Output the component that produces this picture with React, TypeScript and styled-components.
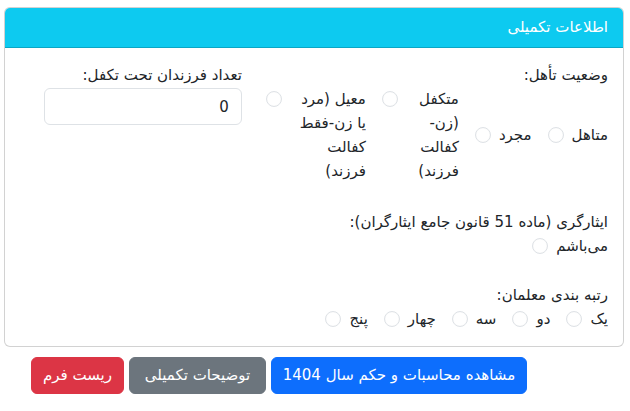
import React from 'react';
import styled, { createGlobalStyle } from 'styled-components';

const Global = createGlobalStyle`
  *, *::before, *::after { box-sizing: border-box; }
  html, body { margin: 0; padding: 0; background: #fff; }
  body {
    font-family: "DejaVu Sans", "Noto Sans", sans-serif;
    font-size: 16px;
    line-height: 1.5;
    color: #212529;
    direction: rtl;
  }
`;

const Page = styled.div`
  padding: 7px 6px 0 4px;
`;

const Card = styled.div`
  border: 1px solid rgba(0, 0, 0, 0.175);
  border-radius: 6px;
  overflow: hidden;
  background: #fff;
`;

const CardHeader = styled.div`
  background: #0dcaf0;
  color: #fff;
  padding: 7px 15px 8px;
  line-height: 24px;
  font-size: 15px;
  border-bottom: 1px solid rgba(0, 0, 0, 0.175);
`;

const CardBody = styled.div`
  padding: 15px 15px 15px;
`;

const TopRow = styled.div`
  display: flex;
  gap: 24px;
  align-items: flex-start;
`;

const Col = styled.div<{ $w: number }>`
  flex: 0 0 ${(p) => p.$w}px;
  display: flex;
  flex-direction: column;
`;

const Section = styled.div<{ $mt: number }>`
  margin-top: ${(p) => p.$mt}px;
`;

const Label = styled.div`
  font-size: 15px;
  line-height: 24px;
`;

const Options = styled.div<{ $align?: string }>`
  display: flex;
  align-items: ${(p) => p.$align || 'center'};
`;

const Option = styled.label`
  display: flex;
  align-items: flex-start;
  gap: 8px;
  margin-left: 16px;
  font-size: 15px;
  line-height: 24px;
  cursor: pointer;
  &:last-child { margin-left: 0; }
`;

const OptionText = styled.span<{ $w?: number }>`
  display: block;
  ${(p) => (p.$w ? `width: ${p.$w}px;` : '')}
  flex-shrink: 0;
`;

const Radio = styled.input.attrs({ type: 'radio' })`
  appearance: none;
  -webkit-appearance: none;
  margin: 4px 0 0;
  width: 16px;
  height: 16px;
  flex: 0 0 16px;
  border-radius: 50%;
  border: 1px solid #dee2e6;
  background: #fff;
  box-shadow: inset 0 0 1px rgba(0, 0, 0, 0.08);
`;

const TextInput = styled.input`
  display: block;
  width: 100%;
  height: 37px;
  margin-top: 1px;
  padding: 6px 12px;
  font-family: inherit;
  font-size: 15px;
  line-height: 24px;
  color: #212529;
  text-align: right;
  direction: rtl;
  border: 1px solid #dee2e6;
  border-radius: 6px;
  background: #fff;
`;

const ButtonRow = styled.div`
  display: flex;
  gap: 5px;
  margin-top: 10px;
  margin-right: 97px;
`;

const Button = styled.button<{ $bg: string; $w: number }>`
  font-family: inherit;
  font-size: 15px;
  line-height: 23px;
  padding: 6px 0;
  width: ${(p) => p.$w}px;
  color: #fff;
  background: ${(p) => p.$bg};
  border: 1px solid ${(p) => p.$bg};
  border-radius: 6px;
  white-space: nowrap;
  text-align: center;
  cursor: pointer;
`;

export default function App() {
  return (
    <>
      <Global />
      <Page>
        <Card>
          <CardHeader>اطلاعات تکمیلی</CardHeader>
          <CardBody>
            <TopRow>
              <Col $w={341}>
                <Label>وضعیت تأهل:</Label>
                <Options>
                  <Option>
                    <OptionText>متاهل</OptionText>
                    <Radio name="m" />
                  </Option>
                  <Option>
                    <OptionText>مجرد</OptionText>
                    <Radio name="m" />
                  </Option>
                  <Option>
                    <OptionText $w={53}>متکفل (زن-کفالت فرزند)</OptionText>
                    <Radio name="m" />
                  </Option>
                  <Option>
                    <OptionText $w={76}>معیل (مرد یا زن-فقط کفالت فرزند)</OptionText>
                    <Radio name="m" />
                  </Option>
                </Options>
              </Col>
              <Col $w={198}>
                <Label>تعداد فرزندان تحت تکفل:</Label>
                <TextInput defaultValue="0" />
              </Col>
            </TopRow>

            <Section $mt={27}>
              <Label>ایثارگری (ماده 51 قانون جامع ایثارگران):</Label>
              <Options>
                <Option>
                  <OptionText>می‌باشم</OptionText>
                  <Radio name="i" />
                </Option>
              </Options>
            </Section>

            <Section $mt={25}>
              <Label>رتبه بندی معلمان:</Label>
              <Options>
                <Option>
                  <OptionText>یک</OptionText>
                  <Radio name="r" />
                </Option>
                <Option>
                  <OptionText>دو</OptionText>
                  <Radio name="r" />
                </Option>
                <Option>
                  <OptionText>سه</OptionText>
                  <Radio name="r" />
                </Option>
                <Option>
                  <OptionText>چهار</OptionText>
                  <Radio name="r" />
                </Option>
                <Option>
                  <OptionText>پنج</OptionText>
                  <Radio name="r" />
                </Option>
              </Options>
            </Section>
          </CardBody>
        </Card>

        <ButtonRow>
          <Button $bg="#0d6efd" $w={256}>مشاهده محاسبات و حکم سال 1404</Button>
          <Button $bg="#6c757d" $w={137}>توضیحات تکمیلی</Button>
          <Button $bg="#dc3545" $w={93}>ریست فرم</Button>
        </ButtonRow>
      </Page>
    </>
  );
}
